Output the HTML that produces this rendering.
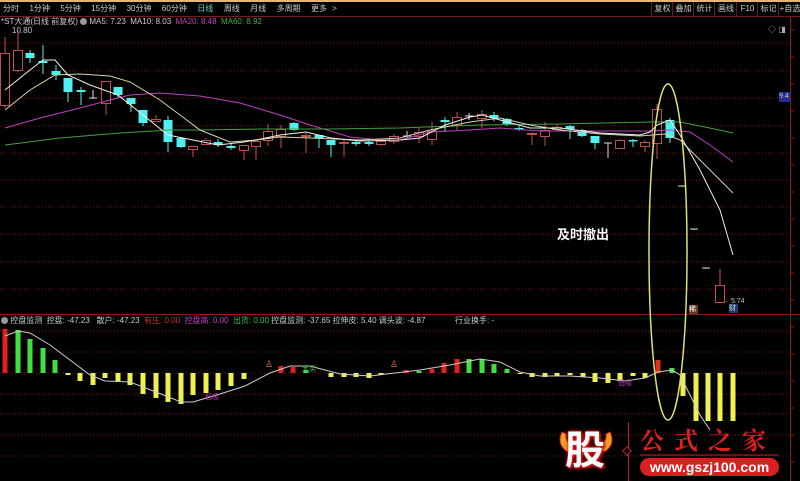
<!DOCTYPE html>
<html><head><meta charset="utf-8"><style>
html,body{margin:0;padding:0;background:#000;width:800px;height:481px;overflow:hidden;font-family:"Liberation Sans","Noto Sans CJK SC",sans-serif}
.t{position:absolute;font-size:8px;white-space:nowrap;color:#ccc;line-height:10px}
.btn{position:absolute;top:2px;height:14px;border-left:1px solid #6a1a1a;font-size:8px;color:#ccc;line-height:14px;text-align:center}
</style></head><body>
<div style="position:absolute;left:0;top:0;width:800px;height:2px;background:#e8b27c"></div>
<div style="position:absolute;left:0;top:16px;width:800px;height:1px;background:#7a1a1a"></div>
<div class="t" style="left:3px;top:4px;word-spacing:3px">分时 &nbsp;1分钟 &nbsp;5分钟 &nbsp;15分钟 &nbsp;30分钟 &nbsp;60分钟 &nbsp;<span style="color:#5fd0d0">日线</span> &nbsp;周线 &nbsp;月线 &nbsp;多周期 &nbsp;更多 &gt;</div>
<div class="btn" style="left:651px;width:21px">复权</div>
<div class="btn" style="left:672px;width:21px">叠加</div>
<div class="btn" style="left:693px;width:21px">统计</div>
<div class="btn" style="left:714px;width:22px">画线</div>
<div class="btn" style="left:736px;width:21px">F10</div>
<div class="btn" style="left:757px;width:21px">标记</div>
<div class="btn" style="left:778px;width:22px">+自选</div>
<div class="t" style="left:1px;top:17px">*ST大通(日线 前复权) <span style="display:inline-block;width:7px;height:7px;border-radius:50%;background:#999;vertical-align:-1px"></span> MA5: 7.23 &nbsp;MA10: 8.03 &nbsp;<span style="color:#c040c0">MA20: 8.48</span> &nbsp;<span style="color:#40b040">MA60: 8.92</span></div>
<div class="t" style="left:12px;top:26px">10.80</div>
<div class="t" style="left:1px;top:316px"><span style="display:inline-block;width:7px;height:7px;border-radius:50%;background:#999;vertical-align:-1px"></span> 控盘监测 &nbsp;控盘: -47.23 &nbsp;&nbsp;散户: -47.23</div>
<div class="t" style="left:144px;top:316px"><span style="color:#d03030">有庄: 0.00</span> &nbsp;<span style="color:#c040c0">控盘高: 0.00</span> &nbsp;<span style="color:#40c040">出货: 0.00</span> 控盘监测: -37.65 拉伸皮: 5.40 调头波: -4.87</div>
<div class="t" style="left:455px;top:316px">行业换手: -</div>
<div style="position:absolute;left:557px;top:224px;color:#fff;font-size:13px;font-weight:bold;font-family:'Noto Sans CJK SC',sans-serif">及时撤出</div>
<div style="position:absolute;left:779px;top:92px;width:12px;height:10px;background:#2030a0;color:#ccc;font-size:7px;line-height:10px">9.4</div>
<div class="t" style="left:722px;top:297px;font-size:7px">← 5.74</div>
<div style="position:absolute;left:689px;top:305px;width:9px;font-size:7px;color:#fff;background:#6a3a20;line-height:9px;white-space:nowrap">稀</div>
<div style="position:absolute;left:729px;top:304px;width:9px;font-size:7px;color:#cde;background:#203a6a;line-height:9px;white-space:nowrap">财</div>
<svg id="s" width="800" height="481" style="position:absolute;left:0;top:0"></svg>
<div style="position:absolute;left:560px;top:422px;width:50px;height:50px;color:#fff;font-size:40px;font-weight:bold;line-height:50px;text-align:center;text-shadow:0 0 3px #e02020,0 0 3px #e02020,2px 2px 2px #a00;font-family:'Noto Sans CJK SC',sans-serif">股</div>
<div style="position:absolute;left:640px;top:424px;color:#e02020;font-size:24px;font-weight:bold;letter-spacing:10px;font-family:'Noto Serif CJK SC',serif;line-height:30px">公式之家</div>
<div style="position:absolute;left:640px;top:458px;width:139px;height:18px;border-radius:9px;background:#d82020;color:#fff;font-size:14px;font-weight:bold;text-align:center;line-height:18px">www.gszj100.com</div>
<script>
var s='';
function L(x1,y1,x2,y2,c,w,d){s+='<line x1="'+x1+'" y1="'+y1+'" x2="'+x2+'" y2="'+y2+'" stroke="'+c+'" stroke-width="'+(w||1)+'"'+(d?' stroke-dasharray="'+d+'"':'')+'/>';}
function R(x,y,w,h,f,st){s+='<rect x="'+x+'" y="'+y+'" width="'+w+'" height="'+h+'" fill="'+f+'"'+(st?' stroke="'+st+'"':'')+'/>';}
function P(pts,c){s+='<polyline fill="none" stroke="'+c+'" stroke-width="1" points="'+pts.map(p=>p.join(',')).join(' ')+'"/>';}
[43,71,98,126,153,180,207,234,262,289].forEach(y=>L(0,y,790,y,'#7a1414',1,'1,2'));
[331,352,394,414,435,456].forEach(y=>L(0,y,790,y,'#7a1414',1,'1,2'));
L(0,373,790,373,'#7a1414',1,'1,2');
L(0,314.5,800,314.5,'#8a1a1a',1);
L(790.5,17,790.5,481,'#8a1a1a',1);
for(var y=30;y<481;y+=27)L(790,y,794,y,'#8a1a1a',1);
var C=[[5,53,105,37,108,'r'],[18,50,70,30,72,'r'],[30,53,58,50,63,'c'],[43,61,63,45,74,'c'],[56,71,75,65,80,'c'],[68,78,92,78,102,'c'],[81,90,92,87,105,'c'],[93,98,99,90,99,'d'],[106,81,103,81,115,'r'],[118,87,95,87,98,'c'],[131,98,104,98,112,'c'],[143,110,123,110,126,'c'],[156,119,121,115,122,'r'],[168,120,142,116,152,'c'],[181,138,147,137,148,'c'],[193,146,149,146,157,'r'],[206,140,144,138,145,'r'],[218,142,145,139,147,'c'],[231,146,148,144,150,'c'],[244,145,150,145,160,'r'],[256,141,146,139,160,'r'],[268,131,140,124,146,'r'],[281,129,136,125,148,'r'],[294,123,130,122,131,'c'],[306,135,136,133,153,'r'],[319,135,138,135,148,'c'],[331,140,145,140,157,'c'],[344,142,143,140,157,'r'],[356,142,144,141,146,'c'],[369,142,144,141,146,'c'],[381,141,144,140,146,'r'],[394,136,141,134,144,'r'],[407,136,137,131,138,'d'],[419,132,136,128,143,'r'],[432,131,139,122,145,'r'],[445,120,122,117,132,'c'],[457,117,125,112,130,'r'],[469,116,117,113,120,'d'],[482,114,118,110,128,'r'],[494,115,118,112,121,'c'],[507,119,124,118,126,'c'],[519,128,129,126,131,'c'],[532,133,134,132,145,'r'],[545,130,136,122,146,'r'],[557,127,129,125,131,'r'],[570,126,129,125,139,'c'],[582,130,136,129,137,'c'],[595,136,143,136,149,'c'],[608,143,144,143,158,'d'],[620,140,148,139,149,'r'],[633,140,141,139,147,'c'],[645,142,146,140,152,'r'],[657,109,143,104,159,'r'],[670,120,138,118,143,'c'],[682,186,187,186,187,'d'],[694,229,230,229,230,'d'],[706,268,269,268,269,'d'],[720,285,302,269,302,'r']];
C.forEach(c=>{var x=c[0],col=c[5]=='r'?'#c05050':(c[5]=='c'?'#50f0f0':'#ddd');
 L(x,c[3],x,c[4],col,1);
 if(c[5]=='d'){L(x-4,c[1],x+4,c[1],col,1);}
 else if(c[5]=='r'){R(x-4.5,c[1]+.5,9,Math.max(c[2]-c[1],1),'#000',col);}
 else R(x-4.5,c[1],9,Math.max(c[2]-c[1],1.5),col);
});
P([[5,128],[40,118],[80,108],[110,100],[130,95],[160,93],[200,96],[240,103],[280,115],[310,125],[350,137],[380,140],[400,140],[430,132],[470,130],[500,128],[540,131],[600,131],[650,131],[670,130],[690,132],[710,145],[733,162]],'#c040c0');
P([[5,145],[60,138],[120,133],[170,130],[200,130],[260,129],[330,129],[400,128],[480,125],[560,124],[650,122],[680,122],[700,126],[733,133]],'#40a040');
P([[5,110],[30,90],[55,75],[80,74],[110,76],[130,82],[160,100],[180,115],[200,130],[230,142],[256,140],[280,137],[310,138],[360,140],[400,138],[430,130],[470,122],[500,118],[530,125],[560,130],[600,134],[640,136],[665,134],[680,140],[700,160],[733,193]],'#d8d4a8');
P([[5,90],[30,70],[43,60],[55,60],[68,75],[90,85],[118,95],[143,115],[168,135],[193,140],[218,145],[244,142],[256,140],[280,135],[306,132],[331,138],[360,141],[400,140],[420,138],[445,125],[470,117],[482,115],[500,120],[530,128],[560,128],[600,133],[640,135],[650,132],[657,125],[670,120],[680,135],[700,170],[720,210],[733,255]],'#eeeeee');
var B=[[5,329,373,'#e02020'],[18,330,373,'#40e040'],[30,339,373,'#40e040'],[43,348,373,'#40e040'],[55,360,373,'#40e040'],[68,373,375,'#f0f050'],[80,373,381,'#f0f050'],[93,373,385,'#f0f050'],[105,373,378,'#f0f050'],[118,373,381,'#f0f050'],[130,373,385,'#f0f050'],[143,373,394,'#f0f050'],[156,373,398,'#f0f050'],[168,373,402,'#f0f050'],[181,373,404,'#f0f050'],[193,373,395,'#f0f050'],[206,373,393,'#f0f050'],[218,373,390,'#f0f050'],[231,373,386,'#f0f050'],[244,373,379,'#f0f050'],[281,366,373,'#e02020'],[293,367,373,'#e02020'],[306,370,373,'#40e040'],[331,373,377,'#f0f050'],[344,373,377,'#f0f050'],[356,373,377,'#f0f050'],[369,373,378,'#f0f050'],[381,373,375,'#f0f050'],[406,370,373,'#e02020'],[419,371,373,'#40e040'],[432,369,373,'#e02020'],[444,363,373,'#e02020'],[457,359,373,'#e02020'],[469,359,373,'#40e040'],[482,359,373,'#40e040'],[494,364,373,'#40e040'],[507,369,373,'#40e040'],[520,373,374,'#f0f050'],[532,373,377,'#f0f050'],[545,373,377,'#f0f050'],[557,373,376,'#f0f050'],[570,373,375,'#f0f050'],[583,373,377,'#f0f050'],[595,373,382,'#f0f050'],[608,373,383,'#f0f050'],[620,373,381,'#f0f050'],[633,373,376,'#f0f050'],[645,373,378,'#f0f050'],[658,360,373,'#e03020'],[672,368,373,'#40e040'],[683,373,396,'#f0f050'],[696,373,421,'#f0f050'],[708,373,421,'#f0f050'],[720,373,421,'#f0f050'],[733,373,421,'#f0f050']];
B.forEach(b=>R(b[0]-2.5,b[1],5,b[2]-b[1],b[3]));
P([[5,336],[18,331],[30,333],[50,345],[70,360],[90,375],[105,381],[130,382],[156,392],[181,402],[193,402],[220,394],[245,386],[270,373],[290,366],[310,366],[340,374],[370,376],[395,373],[420,370],[450,365],[480,359],[500,362],[520,372],[540,376],[570,376],[600,378],[625,381],[645,378],[658,372],[672,370],[680,375],[690,395],[700,415],[710,430]],'#ccc');
s+='<text x="302" y="371" fill="#40c040" font-size="7">大买</text><text x="205" y="399" fill="#c040c0" font-size="7">低吸</text><text x="618" y="385" fill="#c040c0" font-size="7">低吸</text>';
s+='<text x="265" y="367" fill="#e08040" font-size="9">♙</text><text x="390" y="367" fill="#e08040" font-size="9">♙</text>';
s+='<ellipse cx="668" cy="252" rx="19" ry="168" fill="none" stroke="#e0e070" stroke-width="1.5"/>';
s+='<text x="768" y="32" fill="#aaa" font-size="8">◇ ◨</text>';
s+='<path d="M562 432 Q556 445 568 452 L572 446 Q565 442 566 434Z" fill="#f0a020" stroke="#e02020"/><path d="M610 432 Q616 445 604 452 L600 446 Q607 442 606 434Z" fill="#f0a020" stroke="#e02020"/>';
L(628.5,422,628.5,481,'#c02020',1);
s+='<rect x="624" y="448" width="6" height="6" transform="rotate(45 627 451)" fill="#000" stroke="#c02020"/>';
L(640,455,778,455,'#c02020',1);
document.getElementById('s').innerHTML=s;
</script>
</body></html>
